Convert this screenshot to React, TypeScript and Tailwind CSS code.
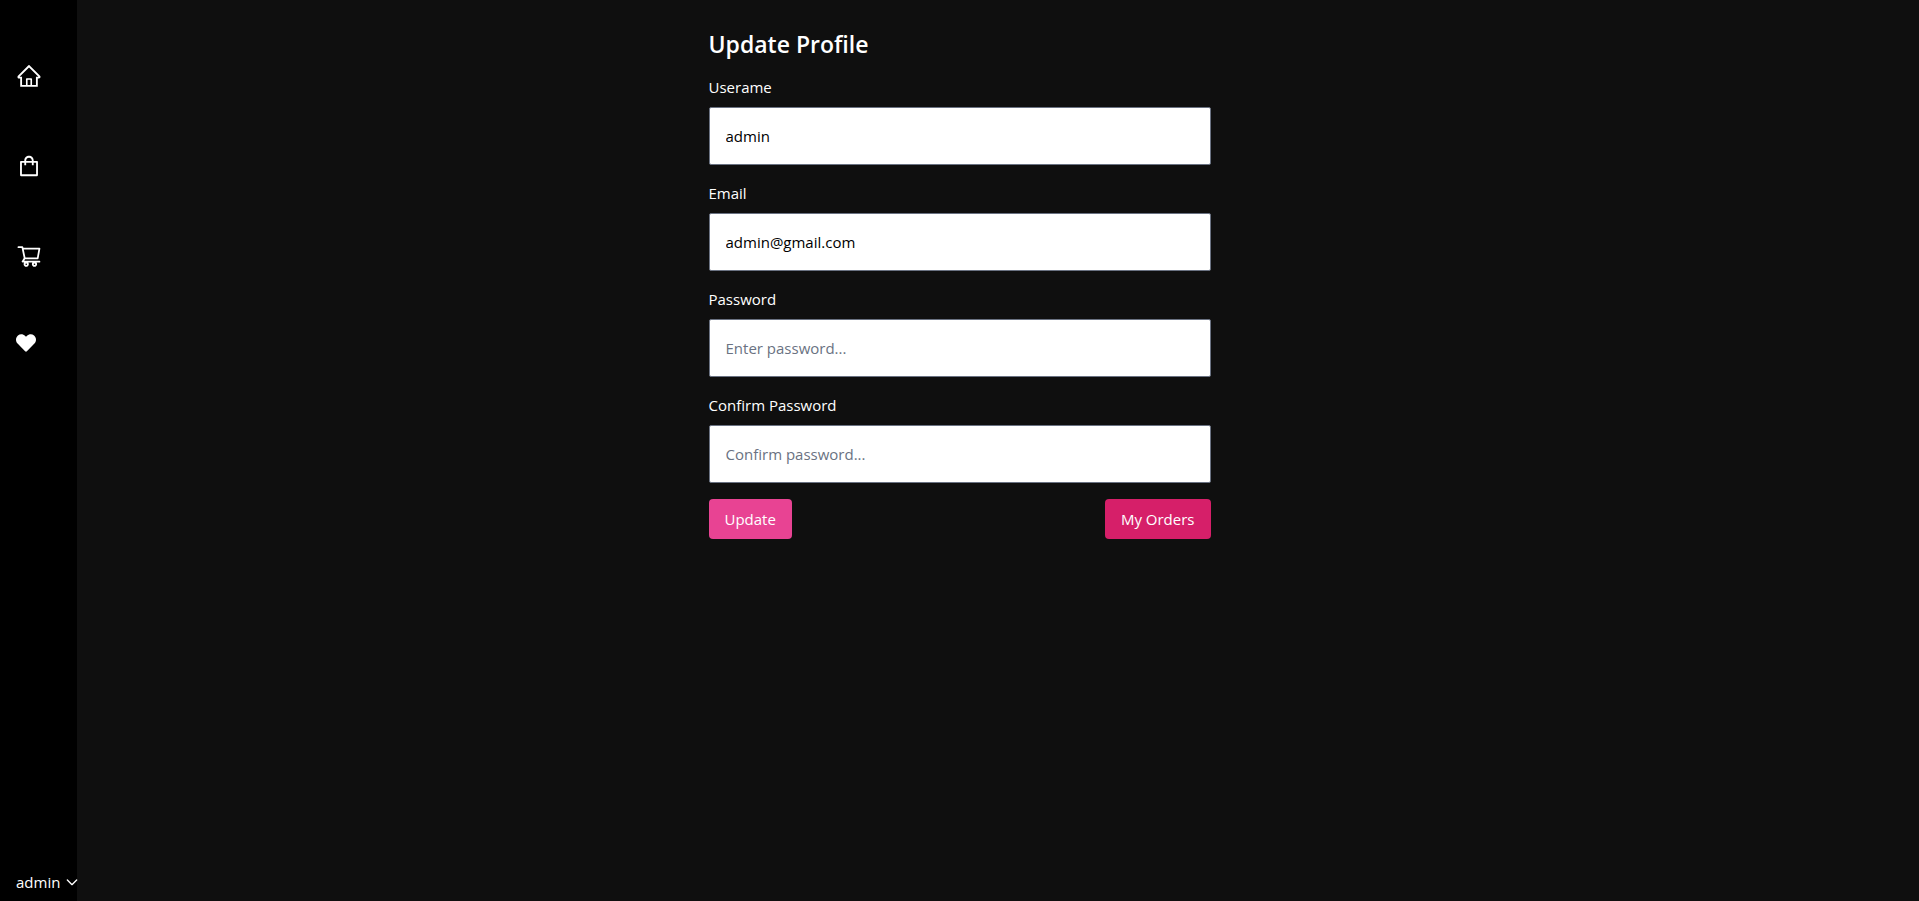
import { useState } from "react";
import {
  AiOutlineHome,
  AiOutlineShopping,
  AiOutlineShoppingCart,
} from "react-icons/ai";
import { FaHeart } from "react-icons/fa";

const links = [
  { label: "Home", icon: <AiOutlineHome size={26} /> },
  { label: "Shop", icon: <AiOutlineShopping size={26} /> },
  { label: "Cart", icon: <AiOutlineShoppingCart size={26} /> },
  { label: "Favorites", icon: <FaHeart size={20} /> },
];

function Sidebar() {
  return (
    <aside className="flex w-[4%] shrink-0 flex-col justify-between bg-black pt-[63px] pb-[3px] pl-4">
      <nav className="flex flex-col gap-16">
        {links.map((link) => (
          <a key={link.label} href="#" aria-label={link.label} className="flex">
            {link.icon}
          </a>
        ))}
      </nav>
      <button type="button" className="flex h-8 items-center gap-1 whitespace-nowrap">
        <span>admin</span>
        <svg className="h-4 w-4 shrink-0" viewBox="0 0 24 24" fill="none" stroke="currentColor">
          <path strokeLinecap="round" strokeLinejoin="round" strokeWidth="2" d="M19 9l-7 7-7-7" />
        </svg>
      </button>
    </aside>
  );
}

type FieldProps = {
  id: string;
  label: string;
  type: string;
  placeholder: string;
  initial?: string;
};

function Field({ id, label, type, placeholder, initial = "" }: FieldProps) {
  const [value, setValue] = useState(initial);
  return (
    <div className="mb-4">
      <label htmlFor={id} className="mb-2 block">
        {label}
      </label>
      <input
        id={id}
        type={type}
        placeholder={placeholder}
        value={value}
        onChange={(e) => setValue(e.target.value)}
        className="block w-full rounded-xs border border-gray-500 bg-white p-4 text-black placeholder:text-gray-500"
      />
    </div>
  );
}

export default function App() {
  return (
    <div className="flex min-h-screen bg-[#0f0f0f] font-['Open_Sans','Noto_Sans',sans-serif] text-[15px] leading-6 text-white">
      <Sidebar />
      <main className="flex grow justify-center pt-7 pr-[4%]">
        <div className="w-full max-w-[502px]">
          <h2 className="mb-[15px] text-[23px] leading-8 font-semibold">Update Profile</h2>
          <form onSubmit={(e) => e.preventDefault()}>
            <Field id="username" label="Userame" type="text" placeholder="Enter name" initial="admin" />
            <Field id="email" label="Email" type="email" placeholder="Enter email" initial="admin@gmail.com" />
            <Field id="password" label="Password" type="password" placeholder="Enter password..." />
            <Field id="confirm" label="Confirm Password" type="password" placeholder="Confirm password..." />
            <div className="flex justify-between">
              <button type="submit" className="rounded bg-[#e84393] px-4 py-2">
                Update
              </button>
              <a href="#" className="rounded bg-[#d61f69] px-4 py-2">
                My Orders
              </a>
            </div>
          </form>
        </div>
      </main>
    </div>
  );
}
